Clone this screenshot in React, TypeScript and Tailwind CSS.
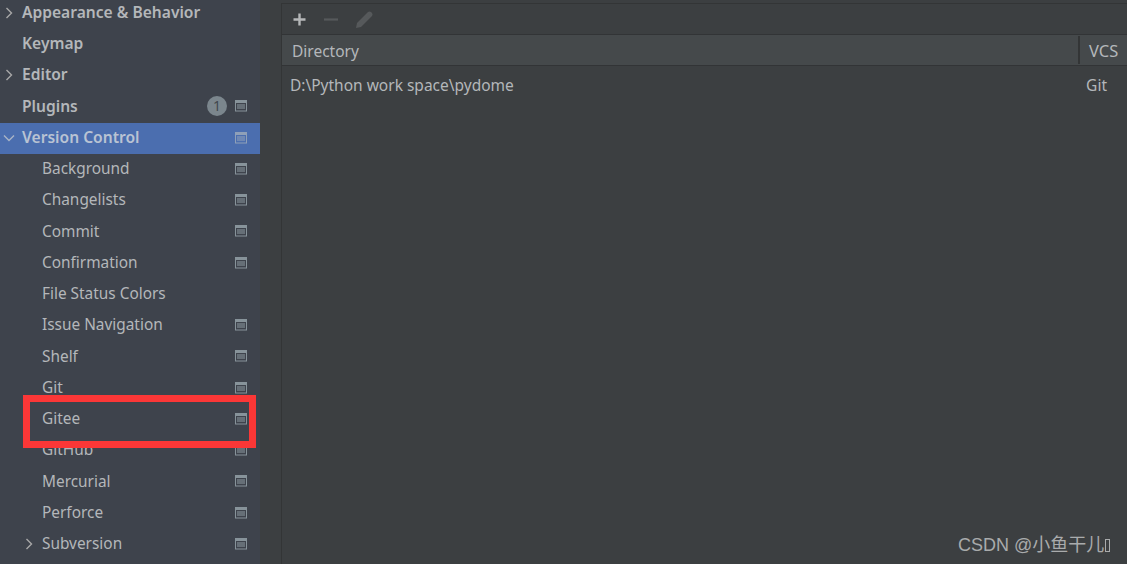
const font = { fontFamily: '"Noto Sans", "Open Sans", sans-serif' };

type Row = { label: string; depth: 0 | 1; bold?: boolean; arrow?: 'right' | 'down'; icon?: boolean; selected?: boolean; badge?: boolean };

const rows: Row[] = [
  { label: 'Appearance & Behavior', depth: 0, bold: true, arrow: 'right' },
  { label: 'Keymap', depth: 0, bold: true },
  { label: 'Editor', depth: 0, bold: true, arrow: 'right' },
  { label: 'Plugins', depth: 0, bold: true, icon: true, badge: true },
  { label: 'Version Control', depth: 0, bold: true, arrow: 'down', icon: true, selected: true },
  { label: 'Background', depth: 1, icon: true },
  { label: 'Changelists', depth: 1, icon: true },
  { label: 'Commit', depth: 1, icon: true },
  { label: 'Confirmation', depth: 1, icon: true },
  { label: 'File Status Colors', depth: 1 },
  { label: 'Issue Navigation', depth: 1, icon: true },
  { label: 'Shelf', depth: 1, icon: true },
  { label: 'Git', depth: 1, icon: true },
  { label: 'Gitee', depth: 1, icon: true },
  { label: 'GitHub', depth: 1, icon: true },
  { label: 'Mercurial', depth: 1, icon: true },
  { label: 'Perforce', depth: 1, icon: true },
  { label: 'Subversion', depth: 1, icon: true, arrow: 'right' },
];

function ProjectIcon({ selected }: { selected?: boolean }) {
  const c = selected ? '#8fa0b8' : '#87939a';
  return (
    <svg width="12" height="12" viewBox="0 0 12 12" className="shrink-0 -translate-y-[1px]">
      <rect x="0.5" y="0.5" width="11" height="10.5" fill="none" stroke={c} />
      <rect x="0" y="0" width="12" height="3" fill={c} />
      <rect x="2" y="4" width="8" height="5" fill={c} opacity="0.55" />
    </svg>
  );
}

function Chevron({ dir }: { dir: 'right' | 'down' }) {
  return (
    <svg width="12" height="12" viewBox="0 0 12 12" fill="none" stroke={dir === 'down' ? '#a9b4c6' : '#a8a8a8'} strokeWidth="1.4">
      {dir === 'right' ? <path d="M3.5 1 L8.5 6 L3.5 11" /> : <path d="M1 3.5 L6 8.5 L11 3.5" />}
    </svg>
  );
}

function SidebarRow({ row }: { row: Row }) {
  return (
    <div className={`relative flex h-[31.25px] items-center pr-[13px] ${row.selected ? 'bg-[#4b6eaf]' : ''}`}>
      {row.arrow && (
        <span className={`flex w-3 -translate-y-[1px] justify-center ${row.depth === 0 ? 'ml-[3px]' : 'ml-[23px]'}`}>
          <Chevron dir={row.arrow} />
        </span>
      )}
      <span
        className={`-translate-y-[1px] whitespace-nowrap leading-none ${row.bold ? 'text-[15.6px] font-semibold' : 'text-[15.4px]'} ${row.selected ? 'text-[#b9c3d3]' : 'text-[#b4b7ba]'} ${
          row.arrow ? 'ml-[7px]' : row.depth === 0 ? 'ml-[22px]' : 'ml-[42px]'
        }`}
      >
        {row.label}
      </span>
      <span className="flex-1" />
      {row.badge && (
        <span className="mr-[8px] flex h-5 w-5 -translate-y-[1px] items-center justify-center rounded-full bg-[#7b868d] text-[14px] leading-none text-[#41464d]">1</span>
      )}
      {row.icon && <ProjectIcon selected={row.selected} />}
    </div>
  );
}

export default function App() {
  return (
    <div className="relative flex h-[564px] w-[1127px] overflow-hidden bg-[#3c3f41]" style={font}>
      <aside className="h-full w-[260px] shrink-0 overflow-hidden bg-[#3e434c]">
        <div className="-mt-[2px]">
          {rows.map((r) => (
            <SidebarRow key={r.label} row={r} />
          ))}
        </div>
      </aside>

      <main className="h-full flex-1 pl-[21px] pt-[3px]">
        <div className="flex h-full flex-col border-l border-t border-[#333536]">
          <div className="flex h-[30px] items-center pl-[11px]">
            <svg width="13" height="13" viewBox="0 0 13 13"><path d="M6.5 0.5v12M0.5 6.5h12" stroke="#b5b7b8" strokeWidth="2.4" /></svg>
            <svg width="14" height="13" viewBox="0 0 14 13" className="ml-[18px]"><path d="M0 6.5h14" stroke="#56595b" strokeWidth="2.2" /></svg>
            <svg width="19" height="19" viewBox="0 0 19 19" className="ml-[17px]"><path d="M1 18 L2 13 L13 2 Q14.5 0.8 16 2 L17 3 Q18.2 4.5 17 6 L6 17 Z" fill="#56595b" /></svg>
          </div>
          <div className="flex h-[32px] items-stretch border-y border-[#323436] bg-[#45494b] text-[15.5px] leading-none text-[#b4b7ba]">
            <div className="flex flex-1 items-center pl-[10px] pt-[3px]">Directory</div>
            <div className="flex w-[49px] items-center py-[1px]">
              <span className="mr-[9px] h-full w-[2px] bg-[#333536]" />
              <span className="pt-[3px] text-[16.5px]">VCS</span>
            </div>
          </div>
          <div className="flex h-[38px] items-center justify-between pl-[8px] pr-[20px] pt-[2px] text-[15.5px] leading-none text-[#b4b7ba]">
            <span>D:\Python work space\pydome</span>
            <span>Git</span>
          </div>
        </div>
      </main>

      <div className="pointer-events-none absolute left-[23px] top-[395px] h-[53px] w-[233px] border-[7px] border-[#fb3737]" />

      <div
        className="pointer-events-none absolute left-[958px] top-[533px] flex items-center whitespace-nowrap text-[18px] leading-[24px] text-[#a9abac]"
        style={{ fontFamily: '"Liberation Sans", "Noto Sans CJK SC", sans-serif' }}
      >
        CSDN @小鱼干儿
        <span className="ml-[1px] h-[13px] w-[5px] border border-[#a9abac]" />
      </div>
    </div>
  );
}
